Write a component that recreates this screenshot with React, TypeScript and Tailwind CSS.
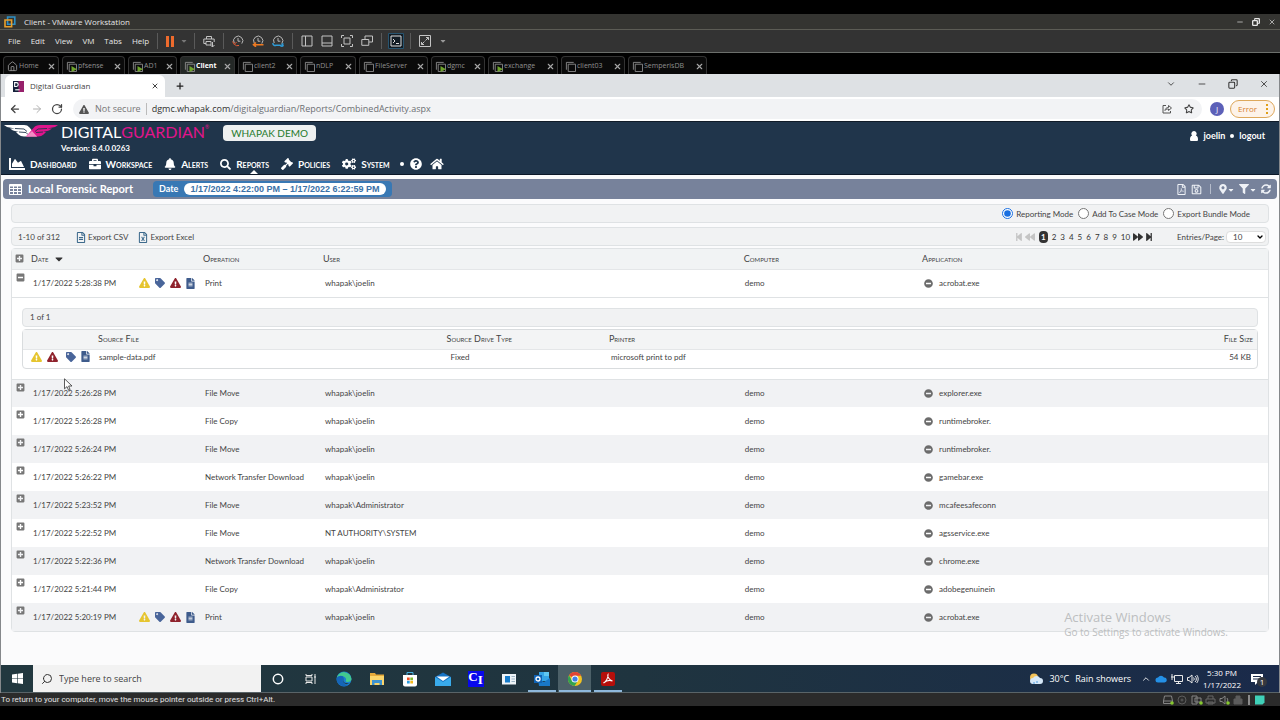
import { useState, type ReactNode } from "react";
import {
  FaBell, FaBriefcase, FaChartArea, FaCogs, FaExclamationTriangle, FaFileAlt, FaFilter, FaGavel, FaHome,
  FaMapMarkerAlt, FaMinusCircle, FaMinusSquare, FaPlusSquare, FaQuestionCircle, FaRegFileAlt, FaRegFileExcel,
  FaRegFilePdf, FaRegSave, FaSearch, FaSyncAlt, FaTag, FaBackward, FaForward,
  FaStepBackward, FaStepForward, FaCaretDown,
} from "react-icons/fa";
import { ArrowLeft, ArrowRight, ChevronDown, ChevronUp, House, Minus, Plus, RotateCw, Search, Star, X, Copy } from "lucide-react";

const sys = "font-['Open_Sans','Noto_Sans',sans-serif]";

/* ---------- VMware chrome ---------- */

function VmIcon({ running }: { running?: boolean }) {
  return (
    <svg viewBox="0 0 12 12" className="h-[11px] w-[11px] shrink-0" fill="none" stroke="#8b8b8b">
      <path d="M1.5 9.5v-8h8" />
      <path d="M3.5 3.5h8v8h-8z" />
      {running && <path d="M6 5.5l6 3.5-6 3z" fill="#6ea32c" stroke="none" />}
    </svg>
  );
}

const vmTabs = [
  { name: "Home", w: "w-14" },
  { name: "pfsense", w: "w-[63px]", running: true },
  { name: "AD1", w: "w-[49px]", running: true },
  { name: "Client", w: "w-[55px]", running: true, active: true },
  { name: "client2", w: "w-[59px]" },
  { name: "nDLP", w: "w-[56px]" },
  { name: "FileServer", w: "w-[69px]" },
  { name: "dgmc", w: "w-[54px]", running: true },
  { name: "exchange", w: "w-[70px]", running: true },
  { name: "client03", w: "w-[64px]" },
  { name: "SemperisDB", w: "w-[79px]" },
];

function Divider() {
  return <span className="h-4 w-px bg-[#5a5a5a]" />;
}

function Clock({ color, kind }: { color: string; kind: number }) {
  return (
    <svg viewBox="0 0 12 12" className="h-3 w-3" fill="none" stroke="#b9b9b9">
      <path d="M2.2 8A4.6 4.6 0 1 1 9.8 8.6" />
      <path d="M6 3v3.2h2.4" />
      {kind === 0 && <path d="M.5 6.5l1.8 2.8L4.6 7M2.3 9.3A4.5 4.5 0 0 0 7 10.5" stroke={color} />}
      {kind === 1 && <path d="M11.5 9.7H1.5M4 7.5L1.5 9.7 4 11.8" stroke={color} strokeWidth="1.6" />}
      {kind === 2 && <path d="M1 8.2a2 2 0 0 0 3 2h4a2 2 0 0 0 3.4 0M11.5 8.6L9.5 9.8" stroke={color} strokeWidth="1.6" />}
    </svg>
  );
}

function VmButton({ label, children, className = "" }: { label: string; children: ReactNode; className?: string }) {
  return (
    <button type="button" aria-label={label} className={`flex h-5 w-5 items-center justify-center ${className}`}>
      {children}
    </button>
  );
}

function VmHeader() {
  const stroke = { fill: "none", stroke: "#c4c4c4" };
  return (
    <header className={`${sys} text-[#e6e6e6]`}>
      <div className="h-3.5 bg-black" />
      <div className="flex h-4 items-center border-b border-[#5c5c55] bg-[#343431] px-1 text-[8px]">
        <svg viewBox="0 0 12 12" className="h-3 w-3" fill="none" strokeWidth="1.6">
          <path d="M3.6 1h7.2v7.2H3.6z" stroke="#2d8fc4" />
          <path d="M1 4h6.6v6.8H1z" stroke="#e9a02c" />
        </svg>
        <h1 className="ml-2 flex-1">Client - VMware Workstation</h1>
        <div className="flex items-center gap-2">
          <Minus className="h-2 w-2" />
          <Copy className="h-2 w-2 -scale-x-100" strokeWidth={4} />
          <X className="h-2 w-2" />
        </div>
      </div>
      <div className="flex h-[23px] items-center border-b border-[#6c6f6c] bg-[#333333] text-[8px]">
        <nav className="flex items-center gap-2.5 pl-2">
          {["File", "Edit", "View", "VM", "Tabs", "Help"].map((m) => (
            <button key={m} type="button">{m}</button>
          ))}
        </nav>
        <div className="ml-2 flex items-center">
          <Divider />
          <VmButton label="Suspend" className="ml-0.5">
            <svg viewBox="0 0 8 11" className="h-[11px] w-2"><path d="M0 0h3v11H0zM5 0h3v11H5z" fill="#ee6b2d" /></svg>
          </VmButton>
          <FaCaretDown className="mr-1.5 h-2 w-2 text-[#777]" />
          <Divider />
          <VmButton label="Send keys" className="mx-1">
            <svg viewBox="0 0 12 12" className="h-3 w-3" {...stroke}>
              <path d="M3.5 4V1.500h5V4M3 8.500H.8V4h10.400v3M3 6.500h5v3.500H3z" /><path d="M9.500 7v5M7.500 10l2 2 2-2" />
            </svg>
          </VmButton>
          <Divider />
          <VmButton label="Take snapshot" className="ml-1"><Clock color="#e25c37" kind={0} /></VmButton>
          <VmButton label="Revert snapshot"><Clock color="#ee7a22" kind={1} /></VmButton>
          <VmButton label="Manage snapshots" className="mr-1"><Clock color="#2f9bd6" kind={2} /></VmButton>
          <Divider />
          <VmButton label="Library" className="ml-1">
            <svg viewBox="0 0 12 12" className="h-3 w-3" {...stroke}><path d="M1 1h10v10H1zM4.500 1v10" /></svg>
          </VmButton>
          <VmButton label="Thumbnails">
            <svg viewBox="0 0 12 12" className="h-3 w-3" {...stroke}><path d="M1 1h10v10H1zM1 8h10" /></svg>
          </VmButton>
          <VmButton label="Full screen">
            <svg viewBox="0 0 12 12" className="h-3 w-3" {...stroke}>
              <path d="M.5 3V.5H3M9 .5h2.500V3M11.500 9v2.500H9M3 11.500H.5V9M3 3h6v6H3z" />
            </svg>
          </VmButton>
          <VmButton label="Unity" className="mr-1">
            <svg viewBox="0 0 12 12" className="h-3 w-3" {...stroke}><path d="M4 4V1h7.500v6H8M.8 4.500h7v5.800h-7z" /></svg>
          </VmButton>
          <Divider />
          <VmButton label="Console" className="mx-1">
            <svg viewBox="0 0 16 16" className="h-4 w-4">
              <path d="M.5.500h15v15H.5z" fill="#121c24" stroke="#28546f" />
              <path d="M3 3h10v10H3zM5 6l2 2-2 2M8 10.500h3" fill="none" stroke="#dcdcdc" />
            </svg>
          </VmButton>
          <Divider />
          <VmButton label="Stretch guest" className="mx-1">
            <svg viewBox="0 0 12 12" className="h-3 w-3" {...stroke}><path d="M.5.500h11v11H.5zM7 2.500h2.500V5M5 9.500H2.500V7M9.500 2.500l-3 3M2.500 9.500l3-3" /></svg>
          </VmButton>
          <FaCaretDown className="h-2 w-2 text-[#999]" />
        </div>
      </div>
      <div className="flex h-[21px] items-end gap-[3px] bg-black pl-[3px] text-[7px]">
        {vmTabs.map((t) => (
          <div
            key={t.name}
            className={`flex h-[18px] items-center rounded-t-sm border border-b-0 border-[#333] pt-px pr-0.5 pl-[3px] ${t.w} ${
              t.active ? "bg-[#242826] font-bold text-white" : "bg-[#0a0a0a] text-[#909090]"
            }`}
          >
            {t.name === "Home" ? <House className="h-[11px] w-[11px] shrink-0" /> : <VmIcon running={t.running} />}
            <span className="ml-px flex-1 whitespace-nowrap">{t.name}</span>
            <button type="button" aria-label={`Close ${t.name}`}>
              <X className="h-[9px] w-[9px] text-[#a8a8a8]" strokeWidth={3} />
            </button>
          </div>
        ))}
      </div>
    </header>
  );
}

/* ---------- Browser chrome ---------- */

function BrowserBar() {
  return (
    <div className={`${sys} text-[#444]`}>
      <div className="flex h-[23px] items-end bg-[#dee1e4]">
        <div className="ml-1 flex h-[22px] w-40 items-center rounded-t-md bg-white pr-1.5 pl-2">
          <svg viewBox="0 0 10 10" className="h-[11px] w-[11px]">
            <path d="M0 0h10v10H0z" fill="#14203a" />
            <path d="M5 0h5v10H5z" fill="#97206b" />
            <path d="M1.500 1.500h1.500a1.600 1.600 0 0 1 0 3.500H1.500z" fill="none" stroke="#fff" />
            <path d="M2 8h4" stroke="#fff" />
          </svg>
          <span className="ml-1.5 flex-1 text-[8px]">Digital Guardian</span>
          <button type="button" aria-label="Close tab"><X className="h-2 w-2" strokeWidth={3} /></button>
        </div>
        <button type="button" aria-label="New tab" className="mb-1.5 ml-2.5"><Plus className="h-2.5 w-2.5 text-[#222]" strokeWidth={3} /></button>
        <div className="mb-2 ml-auto flex items-center gap-[21px] pr-2.5 text-[#333]">
          <ChevronDown className="h-2.5 w-2.5" />
          <Minus className="h-2.5 w-2.5" />
          <Copy className="h-2.5 w-2.5 -scale-x-100" strokeWidth={2.500} />
          <X className="h-2.5 w-2.5" />
        </div>
      </div>
      <div className="flex h-6 items-center bg-white pl-2 text-[9px]">
        <button type="button" aria-label="Back"><ArrowLeft className="h-3 w-3 text-[#444]" strokeWidth={2.500} /></button>
        <button type="button" aria-label="Forward" className="ml-2.5"><ArrowRight className="h-3 w-3 text-[#b0b0b0]" /></button>
        <button type="button" aria-label="Reload" className="ml-2"><RotateCw className="h-3 w-3 text-[#444]" strokeWidth={2.500} /></button>
        <div className="ml-2.5 flex h-5 flex-1 items-center rounded-full bg-[#f2f3f5] px-1.5">
          <FaExclamationTriangle className="h-[9px] w-2.5 text-[#555]" />
          <span className="ml-1.5 text-[#777]">Not secure</span>
          <span className="mx-[5px] h-3 w-px bg-[#bbb]" />
          <span className="flex-1 text-[#6c6f73]"><span className="text-[#333]">dgmc.whapak.com</span>/digitalguardian/Reports/CombinedActivity.aspx</span>
          <svg viewBox="0 0 10 10" className="h-2.5 w-2.5" fill="none" stroke="#555">
            <path d="M4 1.500H1v7.500h7.500V7" /><path d="M3 6.500C3.300 4.500 4.500 3.500 6.500 3.500V1.500L9.500 4 6.500 6.500v-1.500C5 5 4 5.300 3 6.500z" />
          </svg>
          <Star className="mr-0.5 ml-3 h-2.5 w-2.5" strokeWidth={2.500} />
        </div>
        <span className="ml-2 flex h-3.5 w-3.5 items-center justify-center rounded-full bg-[#5c60b8] text-[8px] text-white">J</span>
        <button type="button" className="mr-1 ml-1.5 flex h-[18px] w-[45px] items-center justify-between rounded-full border border-[#dda85c] bg-[#fdf3ea] pr-1.5 pl-[7px] text-[8px] text-[#d67e2c]">
          Error
          <svg viewBox="0 0 2 10" className="h-2.5 w-0.5" fill="#e0a019"><path d="M0 0h2v2H0zM0 4h2v2H0zM0 8h2v2H0z" /></svg>
        </button>
      </div>
    </div>
  );
}

/* ---------- Digital Guardian ---------- */

const navItems = [
  { label: "Dashboard", icon: <FaChartArea className="h-4 w-4" /> },
  { label: "Workspace", icon: <FaBriefcase className="h-3 w-3" /> },
  { label: "Alerts", icon: <FaBell className="h-3 w-3" /> },
  { label: "Reports", icon: <FaSearch className="h-[11px] w-[11px]" /> },
  { label: "Policies", icon: <FaGavel className="h-3 w-3" /> },
  { label: "System", icon: <FaCogs className="h-3.5 w-3.5" /> },
];

function AppHeader() {
  return (
    <div className="flex h-[54px] justify-between border-t border-b border-t-[#101b28] border-b-[#0c1828] bg-[#20354b] text-white">
      <div className="flex flex-col">
        <div className="flex items-start">
          <svg viewBox="0 0 54 12" className="mt-[3px] ml-[3px] h-3 w-[54px] shrink-0">
            <path d="M0 0h20c2.500 0 4 .8 5.500 2.500L33 11.500H20c-2.500 0-4-.7-5.500-2L12 7h3L9 5.500 6 3.500h5L3 2z" fill="#fff" />
            <path d="M11 3.500l9 .5 3 2.500M15 7l7 .5 2 2" fill="none" stroke="#20354b" strokeWidth=".9" />
            <path d="M54 0H36c-3 0-4.500.8-6.500 3L22 11.500h12c2.500 0 4-.7 5.500-2L42 7h-3l6-1.500 3-2h-5L51 2z" fill="#e0148c" />
            <path d="M22 11.500h11l-5-5.500z" fill="#f28cc4" />
            <path d="M43 3.500l-9 .5-3 2.500M39 7l-7 .5" fill="none" stroke="#20354b" strokeWidth=".9" />
          </svg>
          <div className="ml-[3px]">
            <div className="flex items-start font-['Lato',sans-serif] text-base leading-5 text-white">
              DIGITAL<span className="text-[#e0148c]">GUARDIAN</span>
              <span className="text-[5px] leading-2.5 text-[#e0148c]">®</span>
            </div>
            <div className="mt-0.5 text-[8px] leading-2 font-bold">Version: 8.4.0.0263</div>
          </div>
          <div className="mt-[3px] ml-3.5 rounded-sm bg-[#eef0f0] px-2 text-[10px] leading-4 text-[#1f7a2c]">WHAPAK DEMO</div>
        </div>
        <nav className="mt-auto flex h-5 items-center gap-3 pl-2 text-[10px] font-bold [font-variant:small-caps]">
          {navItems.map((n) => (
            <a key={n.label} href="#" className="relative flex h-full items-center gap-[5px]">
              {n.icon}
              {n.label}
              {n.label === "Reports" && (
                <svg viewBox="0 0 8 4" className="absolute bottom-0 left-[30px] h-1 w-2"><path d="M0 4l4-4 4 4z" fill="#fff" /></svg>
              )}
            </a>
          ))}
          <span className="-ml-0.5 h-1 w-1 rounded-full bg-white" />
          <a href="#" aria-label="Help" className="-ml-1.5"><FaQuestionCircle className="h-3 w-3" /></a>
          <a href="#" aria-label="Home" className="-ml-1"><FaHome className="h-3 w-3.5" /></a>
        </nav>
      </div>
      <div className="flex h-[27px] items-center gap-[5px] pr-3.5 text-[9px] font-bold">
        <svg viewBox="0 0 8 10" className="h-2.5 w-2" fill="#fff"><path d="M4 0a2.600 2.600 0 0 1 1.800 4.500C7.500 5 8 6.500 8 8.500 8 9.500 7.500 10 6.500 10h-5C.5 10 0 9.500 0 8.500 0 6.500.5 5 2.200 4.500A2.600 2.600 0 0 1 4 0z" /></svg>
        <a href="#">joelin</a>
        <span className="h-1 w-1 rounded-full bg-white" />
        <a href="#">logout</a>
      </div>
    </div>
  );
}

function ReportBar() {
  return (
    <div className="mx-0.5 mt-1 flex h-5 items-center rounded-sm bg-[#77829b] px-1.5 text-white">
      <svg viewBox="0 0 13 11" className="h-[11px] w-[13px]">
        <rect width="13" height="11" rx="1" fill="#fff" />
        <path d="M1 2.500h3v1.500H1zM5 2.500h3v1.500H5zM9 2.500h3v1.500H9zM1 5h3v2H1zM5 5h3v2H5zM9 5h3v2H9zM1 8h3v2H1zM5 8h3v2H5zM9 8h3v2H9z" fill="#77829b" />
      </svg>
      <h2 className="ml-1.5 text-[11px] font-bold">Local Forensic Report</h2>
      <div className="ml-5 flex h-4 items-center rounded-sm bg-[#3878b4] px-1.5 text-[9px] font-bold">
        Date
        <span className="ml-1.5 rounded-full bg-white px-1.5 font-['Liberation_Sans',sans-serif] text-[9px] leading-3 font-bold text-[#3a71a8]">
          1/17/2022 4:22:00 PM – 1/17/2022 6:22:59 PM
        </span>
      </div>
      <div className="ml-auto flex items-center text-[#eef1f6]">
        <button type="button" aria-label="Export PDF"><FaRegFilePdf className="h-[11px] w-[11px]" /></button>
        <button type="button" aria-label="Save" className="ml-1"><FaRegSave className="h-[11px] w-[11px]" /></button>
        <span className="mx-2 h-2.5 w-px bg-[#b5bccb]" />
        <button type="button" aria-label="Location" className="flex items-end"><FaMapMarkerAlt className="h-2.5 w-2" /><FaCaretDown className="h-2 w-2" /></button>
        <button type="button" aria-label="Filter" className="ml-1 flex items-end"><FaFilter className="h-2.5 w-2.5" /><FaCaretDown className="h-2 w-2" /></button>
        <button type="button" aria-label="Refresh" className="ml-1"><FaSyncAlt className="h-2.5 w-2.5" /></button>
      </div>
    </div>
  );
}

const yellow = <FaExclamationTriangle className="h-2.5 w-[11px] text-[#e6c52f]" />;
const red = <FaExclamationTriangle className="h-2.5 w-[11px] text-[#8f222c]" />;
const tag = <FaTag className="h-2.5 w-2.5 text-[#49659a]" />;
const doc = <FaFileAlt className="h-[11px] w-[9px] text-[#3f5c8c]" />;

type Row = { date: string; op: string; user: string; app: string; flags?: boolean };

const rows: Row[] = [
  { date: "1/17/2022 5:28:38 PM", op: "Print", user: "whapak\\joelin", app: "acrobat.exe", flags: true },
  { date: "1/17/2022 5:26:28 PM", op: "File Move", user: "whapak\\joelin", app: "explorer.exe" },
  { date: "1/17/2022 5:26:28 PM", op: "File Copy", user: "whapak\\joelin", app: "runtimebroker." },
  { date: "1/17/2022 5:26:24 PM", op: "File Move", user: "whapak\\joelin", app: "runtimebroker." },
  { date: "1/17/2022 5:26:22 PM", op: "Network Transfer Download", user: "whapak\\joelin", app: "gamebar.exe" },
  { date: "1/17/2022 5:23:52 PM", op: "File Move", user: "whapak\\Administrator", app: "mcafeesafeconn" },
  { date: "1/17/2022 5:22:52 PM", op: "File Move", user: "NT AUTHORITY\\SYSTEM", app: "agsservice.exe" },
  { date: "1/17/2022 5:22:36 PM", op: "Network Transfer Download", user: "whapak\\joelin", app: "chrome.exe" },
  { date: "1/17/2022 5:21:44 PM", op: "File Copy", user: "whapak\\Administrator", app: "adobegenuinein" },
  { date: "1/17/2022 5:20:19 PM", op: "Print", user: "whapak\\joelin", app: "acrobat.exe", flags: true },
];

const panel = "rounded-sm border border-[#dfe2e4] bg-[#f1f2f3]";

function DataRow({ row, index }: { row: Row; index: number }) {
  const open = index === 0;
  return (
    <tr className={`h-7 ${index % 2 ? "bg-[#f1f2f4]" : "bg-white"}`}>
      <td className="pt-[3px] pl-1 align-top">
        <button type="button" aria-label={open ? "Collapse row" : "Expand row"} className="block">
          {open ? <FaMinusSquare className="h-[9px] w-[9px] text-[#777]" /> : <FaPlusSquare className="h-[9px] w-[9px] text-[#777]" />}
        </button>
      </td>
      <td className="pl-0.5 whitespace-nowrap">{row.date}</td>
      <td>{row.flags && <div className="flex items-center gap-[5px]">{yellow}{tag}{red}{doc}</div>}</td>
      <td className="pl-0.5 whitespace-nowrap">{row.op}</td>
      <td className="pl-0.5">{row.user}</td>
      <td className="pl-px">demo</td>
      <td className="pl-0.5">
        <div className="flex items-center gap-1.5"><FaMinusCircle className="h-[9px] w-[9px] text-[#6c6c6c]" />{row.app}</div>
      </td>
    </tr>
  );
}

function Details() {
  return (
    <div className="px-2.5 py-2.5">
      <div className={`${panel} flex h-[19px] items-center px-[7px]`}>1 of 1</div>
      <div className="mt-0.5 rounded-sm border border-[#d9dcde]">
        <table className="w-full table-fixed border-collapse text-left">
          <colgroup>
            <col className="w-[74px]" /><col className="w-[28%]" /><col className="w-[13%]" /><col /><col className="w-20" />
          </colgroup>
          <thead>
            <tr className="h-5 border-b border-[#e4e6e8] bg-[#f3f4f5] text-[9px] [font-variant:small-caps]">
              <th aria-label="Flags" />
              <th className="pl-px font-normal">Source File</th>
              <th className="pl-1 font-normal">Source Drive Type</th>
              <th className="pl-1.5 font-normal">Printer</th>
              <th className="pr-1 text-right font-normal">File Size</th>
            </tr>
          </thead>
          <tbody>
            <tr className="h-[18px] align-top">
              <td className="pt-px"><div className="flex items-center gap-[5px] pl-2">{yellow}{red}<span className="-ml-0.5" />{tag}{doc}</div></td>
              <td className="pt-px pl-0.5">sample-data.pdf</td>
              <td className="pt-px pl-2">Fixed</td>
              <td className="pt-px pl-2">microsoft print to pdf</td>
              <td className="pt-px pr-1.5 text-right">54 KB</td>
            </tr>
          </tbody>
        </table>
      </div>
    </div>
  );
}

function Report() {
  const [mode, setMode] = useState("Reporting Mode");
  return (
    <main className="mx-2.5 mt-[5px] text-[8px] leading-3 text-[#444]">
      <div className={`${panel} flex h-[19px] items-center justify-end gap-[5px] pr-[18px]`}>
        {["Reporting Mode", "Add To Case Mode", "Export Bundle Mode"].map((m) => (
          <label key={m} className="flex items-center gap-[3px]">
            <input type="radio" name="mode" checked={mode === m} onChange={() => setMode(m)} className="h-[11px] w-[11px] accent-[#1a6fe0]" />
            {m}
          </label>
        ))}
      </div>
      <div className={`${panel} mt-1 flex h-[19px] items-center pt-px pr-0.5 pl-1.5`}>
        <span>1-10 of 312</span>
        <button type="button" className="ml-4 flex items-center gap-0.5"><FaRegFileAlt className="h-[11px] w-2.5 text-[#3d6a8c]" />Export CSV</button>
        <button type="button" className="ml-2.5 flex items-center gap-0.5"><FaRegFileExcel className="h-[11px] w-2.5 text-[#3d6a8c]" />Export Excel</button>
        <nav aria-label="Pages" className="ml-auto flex items-center gap-1 text-[#333]">
          <FaStepBackward className="h-2.5 w-2 text-[#c4c4c4]" />
          <FaBackward className="-ml-0.5 h-2.5 w-2.5 text-[#c4c4c4]" />
          <a href="#" aria-current="page" className="rounded-sm bg-[#333] px-0.5 font-bold text-white">1</a>
          {[2, 3, 4, 5, 6, 7, 8, 9, 10].map((n) => <a key={n} href="#">{n}</a>)}
          <FaForward className="-ml-px h-2.5 w-2.5" />
          <FaStepForward className="-ml-0.5 h-2.5 w-2" />
        </nav>
        <label htmlFor="entries" className="ml-6">Entries/Page:</label>
        <span className="relative ml-0.5 flex items-center">
          <select id="entries" defaultValue="10" className="h-3 w-10 appearance-none rounded-sm border border-[#ddd] bg-white pl-1.5 leading-2.5">
            <option>10</option><option>25</option><option>50</option>
          </select>
          <ChevronDown className="pointer-events-none absolute right-0.5 h-2 w-2 text-black" strokeWidth={4} />
        </span>
      </div>
      <div className="mt-0.5 rounded-sm border border-[#dfe2e4] bg-white">
        <table className="w-full table-fixed border-collapse text-left">
          <colgroup>
            <col className="w-[19px]" /><col className="w-[108px]" /><col className="w-16" /><col className="w-[120px]" />
            <col className="w-[33.5%]" /><col className="w-[14.2%]" /><col />
          </colgroup>
          <thead>
            <tr className="h-5 border-b border-[#e4e6e8] bg-[#f1f3f4] text-[9px] [font-variant:small-caps]">
              <th className="pl-[3px]"><button type="button" aria-label="Expand all" className="block"><FaPlusSquare className="h-[9px] w-[9px] text-[#777]" /></button></th>
              <th className="font-normal"><span className="flex items-center gap-1">Date <FaCaretDown className="h-3 w-3 text-[#333]" /></span></th>
              <th aria-label="Flags" />
              <th className="font-normal">Operation</th>
              <th className="font-normal">User</th>
              <th className="font-normal">Computer</th>
              <th className="font-normal">Application</th>
            </tr>
          </thead>
          <tbody>
            <DataRow row={rows[0]} index={0} />
            <tr className="border-t border-b border-[#dfe2e4]"><td colSpan={7}><Details /></td></tr>
            {rows.slice(1).map((r, i) => <DataRow key={r.date + r.op} row={r} index={i + 1} />)}
          </tbody>
        </table>
      </div>
    </main>
  );
}

/* ---------- Windows taskbar ---------- */

function TaskIcon({ label, children, state = "" }: { label: string; children: ReactNode; state?: string }) {
  return (
    <button
      type="button"
      aria-label={label}
      className={`flex h-full w-[33px] items-center justify-center ${state === "active" ? "bg-[#4c6068]" : ""}`}
    >
      <span className={`flex h-full items-center ${state ? "border-b-2 border-[#8fb8dc] pt-0.5" : ""} ${state === "active" ? "px-2" : "px-1.5"}`}>
        <svg viewBox="0 0 16 16" className="h-4 w-4">{children}</svg>
      </span>
    </button>
  );
}

function Taskbar() {
  return (
    <div className="flex h-7 items-stretch border-b border-[#5a6468] bg-linear-to-r from-[#22383f] via-[#1f343f] to-[#1a2a4a] text-white">
      <button type="button" aria-label="Start" className="flex w-8 items-center justify-center">
        <svg viewBox="0 0 12 12" className="h-[11px] w-[11px]" fill="#fff"><path d="M0 1.700l5.500-.8v4.800H0zM6.200.8L12 0v5.700H6.200zM0 6.400h5.500v4.800L0 10.400zM6.200 6.400H12V12l-5.800-.8z" /></svg>
      </button>
      <label className="flex w-[228px] items-center gap-1.5 bg-[#f2f2f2] pl-2">
        <Search className="h-3 w-3 -scale-x-100 text-[#333]" />
        <input type="text" aria-label="Search" placeholder="Type here to search" className="w-48 bg-transparent text-[9px] outline-none placeholder:text-[#444]" />
      </label>
      <TaskIcon label="Cortana"><circle cx="8" cy="8" r="4.700" fill="none" stroke="#fff" strokeWidth="1.500" /></TaskIcon>
      <TaskIcon label="Task view"><path d="M3 3v1.500h6V3M3 13v-1.500h6V13M3 6h6v4H3zM12 3v10M11 6h2" fill="none" stroke="#e8e8e8" /></TaskIcon>
      <TaskIcon label="Edge">
        <circle cx="8" cy="8" r="7.500" fill="#1b7fd0" />
        <path d="M.7 7A7.500 7.500 0 0 1 15.500 8c0 2-2 3-4 3s-2-1-1.500-2C11 6 4 3 .7 7z" fill="#42c98e" />
        <path d="M.6 7C4 3 9 5 7 8c-1 3 2 6 5 6A7.500 7.500 0 0 1 .6 7z" fill="#1565b8" />
        <path d="M8 7c-2 3 0 6 5 5-1 1-1.500 1.500-3 1-3-1-4-4-2-6z" fill="#20343f" />
      </TaskIcon>
      <TaskIcon label="File Explorer">
        <path d="M1 2h5l1 1.500h8V13H1z" fill="#e5a93a" /><path d="M1 5h14v9H1z" fill="#fbd56b" /><path d="M3 9h10v5h-2.500v-2h-5v2H3z" fill="#3f93d0" />
      </TaskIcon>
      <TaskIcon label="Store">
        <path d="M5 4V1.500h6V4" fill="none" stroke="#46b1e0" /><path d="M1 4h14v9.500a2 2 0 0 1-2 2H3a2 2 0 0 1-2-2z" fill="#fff" />
        <path d="M5 6.500h2.700v2.700H5z" fill="#ea4f25" /><path d="M8.300 6.500H11v2.700H8.300z" fill="#7cb82f" /><path d="M5 9.800h2.700v2.700H5z" fill="#2a9de0" /><path d="M8.300 9.800H11v2.700H8.300z" fill="#f6b91a" />
      </TaskIcon>
      <TaskIcon label="Mail"><path d="M0 6l8-4.500L16 6v9H0z" fill="#1673c4" /><path d="M1.500 5.500h13L8 10z" fill="#fff" /><path d="M0 6l8 5 8-5v9H0z" fill="#39abec" /></TaskIcon>
      <button type="button" aria-label="CI" className="flex h-full w-[33px] items-center justify-center">
        <span className="flex h-4 w-4 justify-center bg-[#0808ec] font-['Liberation_Serif',serif] text-[13px] leading-4 font-bold">
          <span className="-mt-0.5">C</span><span className="mt-px">I</span>
        </span>
      </button>
      <TaskIcon label="Window"><path d="M1 3h14v10.500H1z" fill="#eef4f8" /><path d="M4 5h5v6.500H4z" fill="#167ccb" /><path d="M10.500 5.500H14M10.500 8H14M10.500 10.500H14" stroke="#9db4c4" /></TaskIcon>
      <TaskIcon label="Outlook" state="open">
        <path d="M5 1h10v9H5z" fill="#35a5e6" /><path d="M10 1h5v4h-5z" fill="#5fc8f2" /><path d="M4 8l6 3 6-4v8H5z" fill="#1978c8" /><path d="M0 4h8v8H0z" fill="#0f63b5" />
        <circle cx="4" cy="8" r="2" fill="none" stroke="#fff" strokeWidth="1.300" />
      </TaskIcon>
      <TaskIcon label="Chrome" state="active">
        <circle cx="8" cy="8" r="7" fill="#f3c320" />
        <path d="M8 8L2 4.300A7 7 0 0 1 14.200 4.700H8z" fill="#e04435" /><path d="M2 4.300A7 7 0 0 0 7.500 15L11 9.700 5 9.700z" fill="#31a350" />
        <circle cx="8" cy="8" r="3.500" fill="#fff" /><circle cx="8" cy="8" r="2.600" fill="#3f7fe8" />
      </TaskIcon>
      <TaskIcon label="Acrobat" state="open">
        <rect x="1" y="1" width="14" height="14" rx="2" fill="#b50f0b" />
        <path d="M3.500 12c2-1 5-5 4.500-8.500C7 5 9 9 12.500 10c-2-.8-6-.5-9 2z" fill="none" stroke="#fff" strokeWidth="1.100" />
      </TaskIcon>
      <div className="ml-auto flex items-center text-[9px]">
        <svg viewBox="0 0 14 12" className="mr-1.5 h-3 w-3.5">
          <circle cx="5" cy="4.500" r="4" fill="#f3c35a" /><path d="M4 11a3 3 0 0 1 0-6 4 4 0 0 1 7 0 3 3 0 0 1 0 6z" fill="#d6e8f8" /><path d="M5 9v2M8 8v2" stroke="#4a9ae0" />
        </svg>
        <span>30°C</span>
        <span className="ml-1.5">Rain showers</span>
        <ChevronUp className="ml-2.5 h-2.5 w-2.5" />
        <svg viewBox="0 0 12 8" className="ml-1 h-2 w-3"><path d="M3 7.500a2.500 2.500 0 0 1 0-5 3.500 3.500 0 0 1 6 0 2.500 2.500 0 0 1 .5 5z" fill="#2490e6" /></svg>
        <svg viewBox="0 0 12 12" className="ml-1 h-3 w-3" fill="none" stroke="#e8e8e8"><path d="M3.500 2.500h8v6h-8zM1 1v6M0 4h3M7.500 8.500v2M5 10.500h5" /></svg>
        <svg viewBox="0 0 12 12" className="ml-1 h-3 w-3" fill="none" stroke="#e8e8e8"><path d="M.5 4.500H2L5 2v8L2 7.500H.5zM6.500 4.500a2 2 0 0 1 0 3M8 3a4 4 0 0 1 0 6M9.700 2a6 6 0 0 1 0 8" /></svg>
        <div className="ml-1 text-center text-[8px] leading-3"><div>5:30 PM</div><div>1/17/2022</div></div>
        <span className="relative mr-4 ml-2.5">
          <svg viewBox="0 0 12 12" className="h-3 w-3"><path d="M0 1h12v8H7l-3 3V9H0z" fill="#fff" /><path d="M2 3.500h8M2 6h8" stroke="#1a2a4a" /></svg>
          <span className="absolute top-1 left-1.5 flex h-2.5 w-2.5 items-center justify-center rounded-full bg-[#35383f] text-[8px]">1</span>
        </span>
      </div>
    </div>
  );
}

function StatusBar() {
  return (
    <footer className="bg-black pb-3.5 font-['Roboto',sans-serif]">
      <div className="flex h-[13px] items-center bg-[#2b2b2b] text-[8px] text-[#e2e2e2]">
        <span className="flex-1 pl-px">To return to your computer, move the mouse pointer outside or press Ctrl+Alt.</span>
        <svg viewBox="0 0 104 12" className="mr-3.5 h-3 w-[104px]" fill="none" stroke="#858585">
          <path d="M2.500 2h7l1 5h-9zM1.500 7v2.500h9V7" />
          <circle cx="20" cy="6" r="4" stroke="#5c5c5c" /><circle cx="20" cy="6" r="1" stroke="#5c5c5c" />
          <path d="M30 2h5v8h-5zM33 4h6v4h-6z" />
          <path d="M44 5h9v4h-9zM46 5V2h5v3M46 8h5v2h-5z" stroke="#666" />
          <path d="M58 4.500h2L63 2v8L60 7.500h-2zM65 4a3 3 0 0 1 0 4" />
          <path d="M72 5h8v5h-8zM74 5V2h4v3" fill="#5c5c5c" stroke="#5c5c5c" />
          <path d="M87 1v10" stroke="#eee" />
          <path d="M93 1.500h9.500v7l-2 2H93z" fill="#3fd0b8" stroke="none" />
          <g fill="#86c82f" stroke="none"><circle cx="10" cy="9" r="1.800" /><circle cx="39" cy="9" r="1.800" /><circle cx="66" cy="9" r="1.800" /></g>
        </svg>
      </div>
    </footer>
  );
}

export default function App() {
  return (
    <div className="flex min-h-screen flex-col bg-black">
      <VmHeader />
      <div className={`relative flex flex-1 flex-col border-r border-l border-[#85888b] bg-[#fbfbfc] ${sys}`}>
        <BrowserBar />
        <div className="flex-1 pb-2 font-['Lato',sans-serif]">
          <AppHeader />
          <ReportBar />
          <Report />
        </div>
        <Taskbar />
        <div className="pointer-events-none absolute right-[51px] bottom-[54px] text-[#bcbec0]">
          <div className="text-[13px] leading-4">Activate Windows</div>
          <div className="text-[10px] leading-3.5">Go to Settings to activate Windows.</div>
        </div>
        <svg viewBox="0 0 9 13" className="pointer-events-none absolute top-[304px] left-[63px] h-[13px] w-[9px]">
          <path d="M.5.800v10L3 8.600l1.600 3.700 1.500-.7L4.600 8H8z" fill="#fff" stroke="#333" strokeWidth=".8" />
        </svg>
      </div>
      <StatusBar />
    </div>
  );
}
